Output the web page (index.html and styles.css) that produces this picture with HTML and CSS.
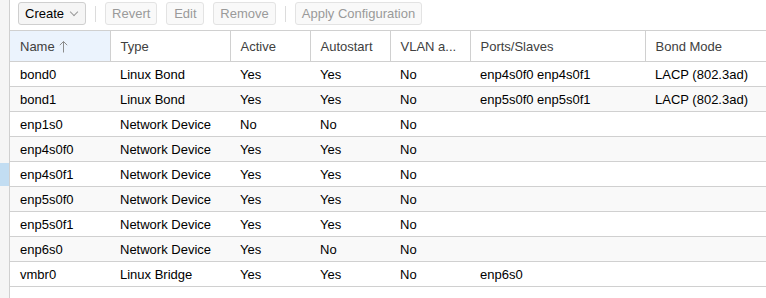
FILE: index.html
```html
<!DOCTYPE html>
<html lang="en">
<head>
    <meta charset="UTF-8">
    <title>Network</title>
    <link rel="stylesheet" href="styles.css">
</head>
<body>
    <div class="layout">
        <div class="side-strip">
            <div class="strip-mark"></div>
        </div>
        <div class="panel">
            <div class="toolbar">
                <button class="tb-button">Create <span class="chevron"></span></button>
                <span class="tb-sep"></span>
                <button class="tb-button" disabled>Revert</button>
                <button class="tb-button" disabled>Edit</button>
                <button class="tb-button" disabled>Remove</button>
                <span class="tb-sep"></span>
                <button class="tb-button" disabled>Apply Configuration</button>
            </div>
            <table class="grid">
                <colgroup>
                    <col class="c-name">
                    <col class="c-type">
                    <col class="c-active">
                    <col class="c-auto">
                    <col class="c-vlan">
                    <col class="c-ports">
                    <col class="c-bond">
                </colgroup>
                <thead>
                    <tr>
                        <th class="sorted">Name
                            <svg class="sort-arrow" width="9" height="13" viewBox="0 0 9 13">
                                <path d="M4.5 1.5 V12.5 M0.8 5.2 L4.5 1.5 L8.2 5.2" fill="none" stroke="#8c8c8c" stroke-width="1"/>
                            </svg>
                        </th>
                        <th>Type</th>
                        <th>Active</th>
                        <th>Autostart</th>
                        <th>VLAN a...</th>
                        <th>Ports/Slaves</th>
                        <th>Bond Mode</th>
                    </tr>
                </thead>
                <tbody>
                    <tr><td>bond0</td><td>Linux Bond</td><td>Yes</td><td>Yes</td><td>No</td><td>enp4s0f0 enp4s0f1</td><td>LACP (802.3ad)</td></tr>
                    <tr><td>bond1</td><td>Linux Bond</td><td>Yes</td><td>Yes</td><td>No</td><td>enp5s0f0 enp5s0f1</td><td>LACP (802.3ad)</td></tr>
                    <tr><td>enp1s0</td><td>Network Device</td><td>No</td><td>No</td><td>No</td><td></td><td></td></tr>
                    <tr><td>enp4s0f0</td><td>Network Device</td><td>Yes</td><td>Yes</td><td>No</td><td></td><td></td></tr>
                    <tr><td>enp4s0f1</td><td>Network Device</td><td>Yes</td><td>Yes</td><td>No</td><td></td><td></td></tr>
                    <tr><td>enp5s0f0</td><td>Network Device</td><td>Yes</td><td>Yes</td><td>No</td><td></td><td></td></tr>
                    <tr><td>enp5s0f1</td><td>Network Device</td><td>Yes</td><td>Yes</td><td>No</td><td></td><td></td></tr>
                    <tr><td>enp6s0</td><td>Network Device</td><td>Yes</td><td>No</td><td>No</td><td></td><td></td></tr>
                    <tr><td>vmbr0</td><td>Linux Bridge</td><td>Yes</td><td>Yes</td><td>No</td><td>enp6s0</td><td></td></tr>
                </tbody>
            </table>
        </div>
    </div>
</body>
</html>
```

FILE: styles.css
```css
:root {
    --border: #d0d0d0;
    --strip-bg: #f5f5f5;
    --stripe-bg: #f9f9f9;
    --sorted-bg: #ebf3fd;
    --mark-bg: #c2ddf2;
    --header-text: #404040;
    --disabled-text: #9a9a9a;
}

body {
    margin: 0;
    font-family: 'Liberation Sans', Arial, sans-serif;
    font-size: 13px;
    color: #000;
    background: #fff;
}

.layout {
    display: flex;
    height: 298px;
}

.side-strip {
    width: 10px;
    flex: none;
    background: var(--strip-bg);
    border-right: 1px solid var(--border);
    padding-top: 163px;
    box-sizing: border-box;
}

.strip-mark {
    width: 9px;
    height: 23px;
    background: var(--mark-bg);
}

.panel {
    flex: 1;
    min-width: 0;
}

.toolbar {
    display: flex;
    align-items: flex-start;
    gap: 9px;
    height: 31px;
    padding: 2px 0 0 8px;
    box-sizing: border-box;
    border-bottom: 1px solid var(--border);
}

.tb-button {
    height: 23px;
    min-width: 38px;
    padding: 0 6px;
    font-family: inherit;
    font-size: 13px;
    color: #000;
    background: #f5f5f5;
    border: 1px solid #cfcfcf;
    border-radius: 3px;
    display: flex;
    align-items: center;
    justify-content: center;
    gap: 6px;
}

.tb-button:disabled {
    color: var(--disabled-text);
    background: #f9f9f9;
    border-color: #e3e3e3;
}

.chevron {
    width: 5px;
    height: 5px;
    border-right: 1px solid #9a9a9a;
    border-bottom: 1px solid #9a9a9a;
    transform: rotate(45deg);
    margin: -3px 2px 0 1px;
}

.tb-sep {
    width: 1px;
    height: 16px;
    margin-top: 4px;
    background: #dcdcdc;
}

.grid {
    width: 100%;
    table-layout: fixed;
    border-collapse: collapse;
}

.c-name { width: 100px; }
.c-type { width: 120px; }
.c-active { width: 80px; }
.c-auto { width: 80px; }
.c-vlan { width: 80px; }
.c-ports { width: 175px; }

.grid th {
    height: 30px;
    padding: 0 10px;
    text-align: left;
    font-weight: normal;
    color: var(--header-text);
    border-right: 1px solid var(--border);
    border-bottom: 1px solid var(--border);
    white-space: nowrap;
    overflow: hidden;
}

.grid th:last-child {
    border-right: none;
}

.grid th.sorted {
    background: var(--sorted-bg);
}

.sort-arrow {
    vertical-align: -2px;
    margin-left: 1px;
}

.grid td {
    height: 24px;
    padding: 0 10px;
    border-bottom: 1px solid var(--border);
    white-space: nowrap;
    overflow: hidden;
}

.grid tbody tr:nth-child(even) td {
    background: var(--stripe-bg);
}
```
